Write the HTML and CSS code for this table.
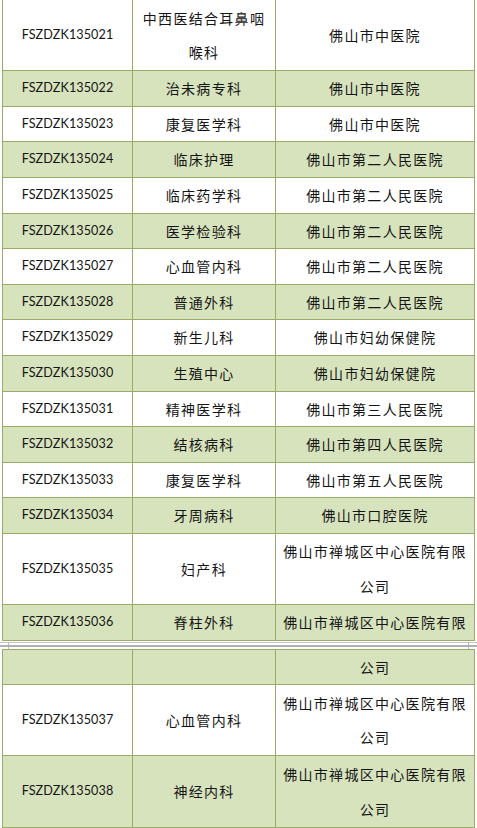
FILE: index.html
```html
<!DOCTYPE html>
<html lang="zh-CN">
<head>
<meta charset="utf-8">
<title>佛山市重点专科</title>
<link rel="stylesheet" href="styles.css">
</head>
<body>
<div class="sheet">
  <table class="grid grid-first">
    <colgroup><col class="c-id"><col class="c-dept"><col class="c-org"></colgroup>
    <tbody>
      <tr class="odd tall"><td class="id">FSZDZK135021</td><td class="cn">中西医结合耳鼻咽喉科</td><td class="cn">佛山市中医院</td></tr>
      <tr class="even"><td class="id">FSZDZK135022</td><td class="cn">治未病专科</td><td class="cn">佛山市中医院</td></tr>
      <tr class="odd"><td class="id">FSZDZK135023</td><td class="cn">康复医学科</td><td class="cn">佛山市中医院</td></tr>
      <tr class="even"><td class="id">FSZDZK135024</td><td class="cn">临床护理</td><td class="cn">佛山市第二人民医院</td></tr>
      <tr class="odd"><td class="id">FSZDZK135025</td><td class="cn">临床药学科</td><td class="cn">佛山市第二人民医院</td></tr>
      <tr class="even"><td class="id">FSZDZK135026</td><td class="cn">医学检验科</td><td class="cn">佛山市第二人民医院</td></tr>
      <tr class="odd"><td class="id">FSZDZK135027</td><td class="cn">心血管内科</td><td class="cn">佛山市第二人民医院</td></tr>
      <tr class="even"><td class="id">FSZDZK135028</td><td class="cn">普通外科</td><td class="cn">佛山市第二人民医院</td></tr>
      <tr class="odd"><td class="id">FSZDZK135029</td><td class="cn">新生儿科</td><td class="cn">佛山市妇幼保健院</td></tr>
      <tr class="even"><td class="id">FSZDZK135030</td><td class="cn">生殖中心</td><td class="cn">佛山市妇幼保健院</td></tr>
      <tr class="odd"><td class="id">FSZDZK135031</td><td class="cn">精神医学科</td><td class="cn">佛山市第三人民医院</td></tr>
      <tr class="even"><td class="id">FSZDZK135032</td><td class="cn">结核病科</td><td class="cn">佛山市第四人民医院</td></tr>
      <tr class="odd"><td class="id">FSZDZK135033</td><td class="cn">康复医学科</td><td class="cn">佛山市第五人民医院</td></tr>
      <tr class="even"><td class="id">FSZDZK135034</td><td class="cn">牙周病科</td><td class="cn">佛山市口腔医院</td></tr>
      <tr class="odd tall"><td class="id">FSZDZK135035</td><td class="cn">妇产科</td><td class="cn">佛山市禅城区中心医院有限公司</td></tr>
      <tr class="even"><td class="id">FSZDZK135036</td><td class="cn">脊柱外科</td><td class="cn">佛山市禅城区中心医院有限</td></tr>
    </tbody>
  </table>
  <div class="page-break">
    <span class="tick tick-left"></span>
    <span class="tick tick-right"></span>
  </div>
  <table class="grid">
    <colgroup><col class="c-id"><col class="c-dept"><col class="c-org"></colgroup>
    <tbody>
      <tr class="even"><td class="id"></td><td class="cn"></td><td class="cn">公司</td></tr>
      <tr class="odd tall"><td class="id">FSZDZK135037</td><td class="cn">心血管内科</td><td class="cn">佛山市禅城区中心医院有限公司</td></tr>
      <tr class="even tall"><td class="id">FSZDZK135038</td><td class="cn">神经内科</td><td class="cn">佛山市禅城区中心医院有限公司</td></tr>
      <tr class="odd"><td class="id"></td><td class="cn"></td><td class="cn"></td></tr>
    </tbody>
  </table>
</div>
</body>
</html>
```
FILE: styles.css
```css
html, body {
  margin: 0;
  padding: 0;
  background: #ffffff;
}
body {
  width: 477px;
  height: 828px;
  overflow: hidden;
  color: #151515;
}
.sheet {
  padding-left: 2px;
  margin-top: -1px;
}
.grid {
  border-collapse: collapse;
  table-layout: fixed;
  width: 473px;
}
.c-id { width: 130px; }
.c-dept { width: 143px; }
.c-org { width: 199px; }
.grid td {
  border: 1px solid #9aab68;
  padding: 0 5px;
  text-align: center;
  vertical-align: middle;
  line-height: 34.6px;
  height: 34.6px;
}
.grid tr.tall td {
  padding-top: 0.5px;
  padding-bottom: 0.5px;
}
.grid tr.even td { background: #d7e3bd; }
.grid tr.odd td { background: #ffffff; }
.id {
  font-family: Lato, "Open Sans", "Liberation Sans", sans-serif;
  font-size: 12.6px;
  letter-spacing: 0.1px;
}
.cn {
  font-family: "Noto Sans CJK SC", "Noto Sans", sans-serif;
  font-size: 14px;
  letter-spacing: 1.3px;
  font-weight: 400;
}
.page-break {
  position: relative;
  height: 8px;
  margin-left: -2px;
  width: 477px;
}
.page-break::before,
.page-break::after {
  content: "";
  position: absolute;
  left: 0;
  right: 0;
  height: 1px;
}
.page-break::before { top: 1px; background: #c4c4c4; }
.page-break::after { top: 4px; height: 2px; background: #b0b0b4; }
.tick {
  position: absolute;
  top: 1px;
  width: 1px;
  height: 7px;
  background: #b8b8b8;
}
.tick-left { left: 8px; }
.tick-right { left: 468px; }
```
